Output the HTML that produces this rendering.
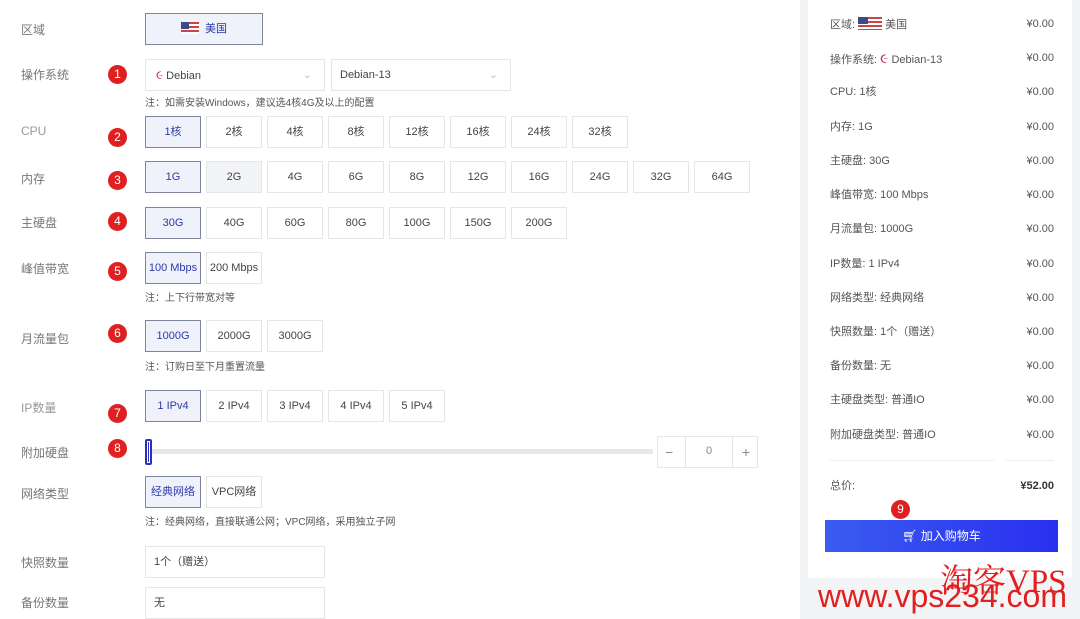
<!DOCTYPE html>
<html><head><meta charset="utf-8"><style>
*{box-sizing:border-box;margin:0;padding:0}
body{width:1080px;height:619px;overflow:hidden;background:#fff;font-family:"Liberation Sans","Noto Sans CJK SC",sans-serif;font-size:11px;color:#333;position:relative}
.a{position:absolute}
.lbl{position:absolute;left:21px;font-size:12px;color:#777}
.b{position:absolute;height:32px;width:56px;border:1px solid #e6e6e6;text-align:center;line-height:30px;font-size:11px;color:#444;background:#fff}
.s{background:#f0f2fb;border-color:#7d849c;color:#2b3aa8}
.n{position:absolute;left:108px;width:19px;height:19px;border-radius:50%;background:#e02020;color:#fff;font-size:12px;text-align:center;line-height:19px}
.note{position:absolute;left:145px;font-size:10px;color:#555}
.r{position:absolute;left:830px;width:224px;font-size:11px;color:#555;line-height:14px}
.r span{position:absolute;right:0;top:0}
.flag{display:inline-block;width:24px;height:13px;vertical-align:-2px;background:repeating-linear-gradient(#c44 0 2px,#fff 2px 4px);position:relative}
.flag i{position:absolute;left:0;top:0;width:10px;height:7px;background:#3b4a8a}
</style></head><body>
<div class="a" style="left:800px;top:0;width:280px;height:619px;background:#f3f4f6"></div>
<div class="a" style="left:808px;top:0;width:264px;height:578px;background:#fff"></div>

<div class="lbl" style="top:21px">区域</div>
<div class="b s" style="left:145px;top:13px;width:118px;height:32px;color:#2b3aa8"><span class="flag" style="width:18px;height:12px;margin-right:6px"><i style="width:8px"></i></span>美国</div>

<div class="lbl" style="top:66px">操作系统</div><div class="n" style="top:65px">1</div>
<div class="b" style="left:145px;top:59px;width:180px;text-align:left;padding-left:10px"><span style="color:#c0264a;font-size:12px">૯</span> Debian<span style="position:absolute;right:12px;color:#bbb">⌄</span></div>
<div class="b" style="left:331px;top:59px;width:180px;text-align:left;padding-left:8px">Debian-13<span style="position:absolute;right:12px;color:#bbb">⌄</span></div>
<div class="note" style="top:94px">注：如需安装Windows，建议选4核4G及以上的配置</div>

<div class="lbl" style="top:124px;color:#999">CPU</div><div class="n" style="top:128px">2</div>
<div class="b s" style="left:145px;top:116px">1核</div><div class="b" style="left:206px;top:116px">2核</div><div class="b" style="left:267px;top:116px">4核</div><div class="b" style="left:328px;top:116px">8核</div><div class="b" style="left:389px;top:116px">12核</div><div class="b" style="left:450px;top:116px">16核</div><div class="b" style="left:511px;top:116px">24核</div><div class="b" style="left:572px;top:116px">32核</div>

<div class="lbl" style="top:170px">内存</div><div class="n" style="top:171px">3</div>
<div class="b s" style="left:145px;top:161px">1G</div><div class="b" style="left:206px;top:161px;background:#f3f4f8">2G</div><div class="b" style="left:267px;top:161px">4G</div><div class="b" style="left:328px;top:161px">6G</div><div class="b" style="left:389px;top:161px">8G</div><div class="b" style="left:450px;top:161px">12G</div><div class="b" style="left:511px;top:161px">16G</div><div class="b" style="left:572px;top:161px">24G</div><div class="b" style="left:633px;top:161px">32G</div><div class="b" style="left:694px;top:161px">64G</div>

<div class="lbl" style="top:214px">主硬盘</div><div class="n" style="top:212px">4</div>
<div class="b s" style="left:145px;top:207px">30G</div><div class="b" style="left:206px;top:207px">40G</div><div class="b" style="left:267px;top:207px">60G</div><div class="b" style="left:328px;top:207px">80G</div><div class="b" style="left:389px;top:207px">100G</div><div class="b" style="left:450px;top:207px">150G</div><div class="b" style="left:511px;top:207px">200G</div>

<div class="lbl" style="top:260px">峰值带宽</div><div class="n" style="top:262px">5</div>
<div class="b s" style="left:145px;top:252px">100 Mbps</div><div class="b" style="left:206px;top:252px">200 Mbps</div>
<div class="note" style="top:289px">注：上下行带宽对等</div>

<div class="lbl" style="top:330px">月流量包</div><div class="n" style="top:324px">6</div>
<div class="b s" style="left:145px;top:320px">1000G</div><div class="b" style="left:206px;top:320px">2000G</div><div class="b" style="left:267px;top:320px">3000G</div>
<div class="note" style="top:358px">注：订购日至下月重置流量</div>

<div class="lbl" style="top:399px;color:#999">IP数量</div><div class="n" style="top:404px">7</div>
<div class="b s" style="left:145px;top:390px">1 IPv4</div><div class="b" style="left:206px;top:390px">2 IPv4</div><div class="b" style="left:267px;top:390px">3 IPv4</div><div class="b" style="left:328px;top:390px">4 IPv4</div><div class="b" style="left:389px;top:390px">5 IPv4</div>

<div class="lbl" style="top:444px">附加硬盘</div><div class="n" style="top:439px">8</div>
<div class="a" style="left:145px;top:449px;width:508px;height:5px;background:#e8e8e8"></div>
<div class="a" style="left:145px;top:439px;width:7px;height:26px;background:#2a2fbf;border-radius:2px;border:2px solid #2a2fbf;box-shadow:inset 0 0 0 1px #fff"></div>
<div class="b" style="left:657px;top:436px;width:101px;color:#888"><span style="position:absolute;left:7px;font-size:14px">−</span><span style="position:absolute;left:27px;top:-1px;height:32px;border-left:1px solid #e6e6e6;border-right:1px solid #e6e6e6;width:48px">0</span><span style="position:absolute;right:7px;font-size:14px">+</span></div>

<div class="lbl" style="top:485px">网络类型</div>
<div class="b s" style="left:145px;top:476px">经典网络</div><div class="b" style="left:206px;top:476px">VPC网络</div>
<div class="note" style="top:513px">注：经典网络，直接联通公网；VPC网络，采用独立子网</div>

<div class="lbl" style="top:554px">快照数量</div>
<div class="b" style="left:145px;top:546px;width:180px;text-align:left;padding-left:8px">1个（赠送）</div>
<div class="lbl" style="top:594px">备份数量</div>
<div class="b" style="left:145px;top:587px;width:180px;text-align:left;padding-left:8px">无</div>

<div class="r" style="top:17px">区域: <span class="flag" style="position:relative;right:auto;top:auto"><i></i></span> 美国<span>¥0.00</span></div>
<div class="r" style="top:51px">操作系统: <b style="color:#c0264a;font-weight:normal;font-size:14px">૯</b> Debian-13<span>¥0.00</span></div>
<div class="r" style="top:85px">CPU: 1核<span>¥0.00</span></div>
<div class="r" style="top:120px">内存: 1G<span>¥0.00</span></div>
<div class="r" style="top:154px">主硬盘: 30G<span>¥0.00</span></div>
<div class="r" style="top:188px">峰值带宽: 100 Mbps<span>¥0.00</span></div>
<div class="r" style="top:222px">月流量包: 1000G<span>¥0.00</span></div>
<div class="r" style="top:257px">IP数量: 1 IPv4<span>¥0.00</span></div>
<div class="r" style="top:291px">网络类型: 经典网络<span>¥0.00</span></div>
<div class="r" style="top:325px">快照数量: 1个（赠送）<span>¥0.00</span></div>
<div class="r" style="top:359px">备份数量: 无<span>¥0.00</span></div>
<div class="r" style="top:393px">主硬盘类型: 普通IO<span>¥0.00</span></div>
<div class="r" style="top:428px">附加硬盘类型: 普通IO<span>¥0.00</span></div>
<div class="a" style="left:830px;top:460px;width:165px;border-top:1px solid #eee"></div>
<div class="a" style="left:1005px;top:460px;width:49px;border-top:1px solid #eee"></div>
<div class="r" style="top:479px">总价:<span style="font-weight:bold;color:#333">¥52.00</span></div>
<div class="n" style="left:891px;top:500px">9</div>
<div class="a" style="left:825px;top:520px;width:233px;height:32px;background:linear-gradient(90deg,#3a5cf0,#2a2ff0);color:#fff;font-size:12px;text-align:center;line-height:32px">🛒︎ 加入购物车</div>

<div class="a" style="left:940px;top:566px;font-family:'Liberation Serif','Noto Serif CJK SC',serif;font-size:33px;color:#e02020;line-height:33px">淘客VPS</div>
<div class="a" style="left:818px;top:578px;font-size:32px;color:#e02020;line-height:36px">www.vps234.com</div>
</body></html>
